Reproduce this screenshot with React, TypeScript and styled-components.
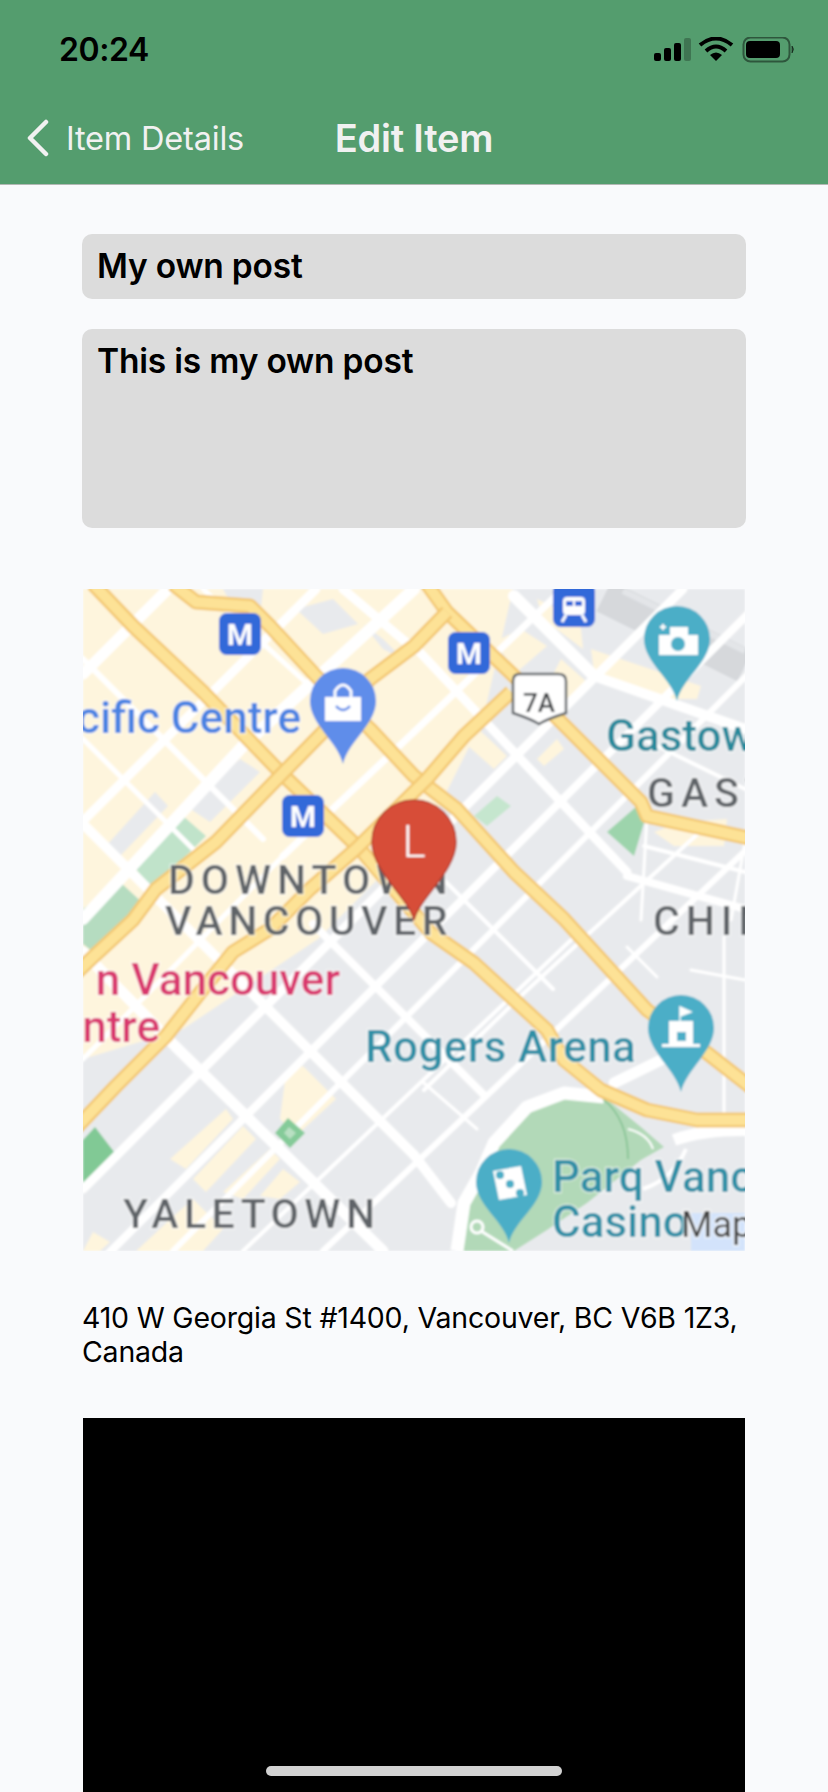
import React from "react";
import styled, { createGlobalStyle } from "styled-components";

const GlobalStyle = createGlobalStyle`
  html, body {
    margin: 0;
    padding: 0;
    background: #f9fafc;
    font-family: Inter, "Liberation Sans", sans-serif;
  }
`;

const Screen = styled.div`
  position: relative;
  width: 828px;
  height: 1792px;
  overflow: hidden;
  background: #f9fafc;
`;

const Header = styled.header`
  height: 185px;
  box-sizing: border-box;
  background: #549d6e;
  border-bottom: 1px solid #b2b8b4;
`;

const StatusBar = styled.div`
  height: 100px;
  padding: 30px 32px 0 59px;
  box-sizing: border-box;
  display: flex;
  justify-content: space-between;
  align-items: flex-start;
`;

const Clock = styled.span`
  font-size: 32px;
  line-height: 40px;
  font-weight: 600;
  letter-spacing: -0.4px;
  color: #000;
`;

const StatusIcons = styled.svg`
  display: block;
  margin-top: 7px;
`;

const NavBar = styled.nav`
  display: grid;
  grid-template-columns: 1fr auto 1fr;
  align-items: center;
  height: 76px;
  color: #f1f1f1;
`;

const BackLink = styled.div`
  display: flex;
  align-items: center;
  gap: 17px;
  padding-left: 26px;
  font-size: 32.5px;
  font-weight: 400;
  letter-spacing: -0.2px;
`;

const Title = styled.h1`
  margin: 0;
  font-size: 38px;
  font-weight: 600;
  letter-spacing: -0.2px;
`;

const Content = styled.main`
  display: flex;
  flex-direction: column;
  padding: 49px 82px 0 82px;
`;

const Field = styled.div<{ $tall?: boolean }>`
  height: ${(p) => (p.$tall ? "199px" : "65px")};
  margin-bottom: ${(p) => (p.$tall ? "61px" : "30px")};
  padding: 12px 15px;
  box-sizing: border-box;
  background: #dcdcdc;
  border-radius: 10px;
  font-size: 33.5px;
  line-height: 40px;
  font-weight: 600;
  color: #000;
  letter-spacing: -0.2px;
`;

const MapFrame = styled.svg`
  display: block;
  width: 662px;
  height: 662px;
  margin-left: 1px;
`;

const Address = styled.p`
  margin: 50px 0 49px;
  font-size: 28.5px;
  line-height: 34px;
  font-weight: 400;
  color: #000;
  letter-spacing: -0.2px;
`;

const VideoBlock = styled.div`
  width: 662px;
  height: 400px;
  margin-left: 1px;
  background: #000;
`;

const HomeIndicator = styled.div`
  position: absolute;
  left: 266px;
  bottom: 16px;
  width: 296px;
  height: 10px;
  border-radius: 5px;
  background: #d2d2d2;
`;

const GREY = "#e8eaed";
const CREAM = "#fef5dd";

// x1,y1,x2,y2,width
const streets: number[][] = [
  [0, 85, 85, 0, 11],
  [0, 232, 233, 0, 9],
  [0, 330, 160, 157, 12],
  [160, 157, 331, 0, 12],
  [0, 470, 200, 267, 5],
  [200, 267, 331, 143, 7],
  [331, 143, 480, 0, 7],
  [0, 600, 600, 0, 9],
  [0, 690, 690, 0, 8],
  [90, 662, 700, 50, 6],
  [160, 662, 488, 351, 4],
  [240, 662, 662, 262, 6],
  [341, 501, 441, 404, 4],
  [441, 404, 620, 240, 4],
  [531, 494, 578, 471, 11],
  [0, 235, 331, 566, 10],
  [331, 566, 368, 614, 10],
  [0, 363, 93, 458, 11],
  [93, 458, 300, 662, 11],
  [0, 70, 180, 250, 6],
  [0, 150, 110, 260, 5],
  [260, 0, 331, 60, 9],
  [331, 57, 544, 283, 9],
  [544, 287, 662, 320, 8],
  [431, 7, 511, 87, 12],
  [511, 87, 662, 140, 10],
  [230, 335, 400, 505, 8],
  [341, 494, 394, 540, 3],
  [564, 227, 558, 331, 3],
  [662, 253, 648, 331, 3],
  [561, 257, 662, 283, 4],
  [641, 348, 641, 531, 3],
  [608, 381, 662, 391, 3],
  [544, 358, 574, 388, 3],
  [560, 150, 662, 200, 4],
  [120, 0, 230, 100, 5],
  [340, 270, 470, 400, 4],
];

const creamAreas = [
  "0,0 430,0 400,130 345,240 235,350 100,440 0,470",
  "203,484 220,477 253,510 213,547 197,530",
  "87,570 143,520 150,530 103,580",
  "110,590 160,537 173,550 123,603",
  "140,603 187,560 197,570 160,610",
  "177,607 200,580 217,593 197,610",
  "10,643 27,653 17,662 0,662",
  "53,662 93,625 110,610 140,640 120,662",
  "508,60 618,97 614,110 561,110 511,83",
  "454,10 497,30 500,60 460,30",
  "411,53 438,40 464,57 434,83",
  "478,70 504,93 484,113 464,97",
  "454,170 474,150 481,160 461,177",
  "364,110 424,167 411,180 358,133",
  "571,243 598,233 644,230 641,257 591,257",
];

const greyBlocks = [
  "23,257 72,203 85,217 37,267",
  "103,217 157,170 177,183 127,233",
  "140,0 180,0 178,18 150,18",
  "213,20 250,10 275,35 240,45",
  "280,35 300,50 320,70 300,60",
];

const yellowRoads = [
  "10,-5 50,37 120,103 197,183 277,260 348,344 391,374 464,441 481,471 518,501 564,521 614,531 670,531",
  "90,-5 113,13 167,17 187,37 233,87 287,140 331,187 374,220 431,283 481,330 564,421 624,464 670,500",
  "344,-5 364,23 431,87 478,133 558,213 564,227 670,250",
  "364,23 331,57 287,90 240,143 197,187 133,253 73,300 50,331 10,368 -8,385",
  "428,103 381,147 344,190 273,260 227,300 187,340 150,363 120,400 83,447 33,497 -8,540",
];

const pinPath = (cx: number, cy: number, r: number, tip: number) =>
  `M${cx} ${tip} C${cx - 5} ${tip - 22} ${cx - r} ${cy + r * 0.7} ${cx - r} ${cy} A${r} ${r} 0 1 1 ${cx + r} ${cy} C${cx + r} ${cy + r * 0.7} ${cx + 5} ${tip - 22} ${cx} ${tip}Z`;

const MetroBadge: React.FC<{ x: number; y: number }> = ({ x, y }) => (
  <g>
    <rect x={x - 21} y={y - 21} width={42} height={42} rx={8} fill="#3069d9" />
    <text x={x} y={y + 11} textAnchor="middle" fontFamily="Roboto, sans-serif" fontSize={30} fontWeight={700} fill="#fff">
      M
    </text>
  </g>
);

type LabelProps = {
  x: number;
  y: number;
  color: string;
  size?: number;
  anchor?: "start" | "end";
  spacing?: number;
  weight?: number;
  children: string;
};

const MapLabel: React.FC<LabelProps> = ({ x, y, color, size = 44, anchor = "start", spacing, weight = 500, children }) => (
  <text
    x={x}
    y={y}
    fill={color}
    fontFamily="Roboto, sans-serif"
    fontSize={size}
    fontWeight={weight}
    textAnchor={anchor}
    letterSpacing={spacing}
    stroke="#ffffff"
    strokeOpacity={0.6}
    strokeWidth={2.5}
    paintOrder="stroke"
  >
    {children}
  </text>
);

const CityMap: React.FC = () => (
  <MapFrame viewBox="0 0 662 662">
    <defs>
      <filter id="soft" x="-5%" y="-5%" width="110%" height="110%">
        <feGaussianBlur stdDeviation="0.8" />
      </filter>
    </defs>
    <g filter="url(#soft)">
      <rect width={662} height={662} fill={GREY} />
      {creamAreas.map((points) => (
        <polygon key={points} points={points} fill={CREAM} />
      ))}
      {greyBlocks.map((points) => (
        <polygon key={points} points={points} fill={GREY} />
      ))}
      <path d="M521 7 L662 77" stroke="#d6d8db" strokeWidth={34} />
      <path d="M540 2 L662 62" stroke="#e3e5e8" strokeWidth={6} />

      {/* parks */}
      <polygon points="50,277 100,227 123,247 70,300" fill="#c0e3ca" />
      <polygon points="0,320 37,293 63,317 47,335 0,335" fill="#b5dcc0" />
      <polygon points="0,331 43,331 10,363 0,355" fill="#b5dcc0" />
      <polygon points="391,227 414,207 428,217 404,237" fill="#c5e6ce" />
      <polygon points="524,243 554,217 563,227 551,267" fill="#9dd4ac" />
      <polygon points="0,551 12,538 35,568 0,601" fill="#81c995" />

      {streets.map(([x1, y1, x2, y2, w]) => (
        <line key={`${x1}-${y1}-${x2}-${y2}`} x1={x1} y1={y1} x2={x2} y2={y2} stroke="#fff" strokeWidth={w} strokeLinecap="round" />
      ))}

      <polygon points="192,544 205,529 222,544 207,559" fill="#85cb99" />
      <polygon points="201,544 206,538 213,544 207,550" fill="#b9e0c3" />

      {/* stadium and park */}
      <path
        d="M398 584 L411 554 444 518 481 504 521 508 558 538 581 558 558 571 504 614 464 641 431 662 374 662 381 614Z"
        fill="#b2d9b8"
      />
      <path
        d="M374 662 L381 614 398 584 411 554 444 518 481 504 521 508"
        fill="none"
        stroke="#fff"
        strokeWidth={13}
        strokeLinejoin="round"
      />
      <path d="M591 551 Q620 540 670 541" stroke="#fff" strokeWidth={12} fill="none" />
      <rect x={608} y={624} width={54} height={38} fill="#d3e3fb" />
      <path d="M603 560 Q590 590 560 600" stroke="#fff" strokeWidth={4} fill="none" />
      <path d="M520 510 Q545 530 545 570" stroke="#7fc08e" strokeWidth={1.5} fill="none" />
      <path d="M545 540 Q565 545 570 560" stroke="#fff" strokeWidth={2} fill="none" />
      <circle cx={394} cy={638} r={6} fill="none" stroke="#fff" strokeWidth={3} />
      <path d="M398 642 L430 662" stroke="#fff" strokeWidth={3} />

      {yellowRoads.map((points) => (
        <g key={points} fill="none" strokeLinejoin="round">
          <polyline points={points} stroke="#f3c873" strokeWidth={15} />
          <polyline points={points} stroke="#fde296" strokeWidth={10} />
        </g>
      ))}

      <MapLabel x={218} y={144} anchor="end" color="#4a82e2">cific Centre</MapLabel>
      <MapLabel x={523} y={162} color="#26899b">Gastown</MapLabel>
      <MapLabel x={564} y={218} color="#5f6368" size={41} spacing={6}>GASTOWN</MapLabel>
      <MapLabel x={85} y={305} color="#5f6368" size={41} spacing={6}>DOWNTOWN</MapLabel>
      <MapLabel x={82} y={346} color="#5f6368" size={41} spacing={5.5}>VANCOUVER</MapLabel>
      <MapLabel x={570} y={346} color="#5f6368" size={41} spacing={6}>CHINATOWN</MapLabel>
      <MapLabel x={40} y={639} color="#5f6368" size={41} spacing={5.5}>YALETOWN</MapLabel>
      <MapLabel x={257} y={406} anchor="end" color="#d9386e">n Vancouver</MapLabel>
      <MapLabel x={77} y={453} anchor="end" color="#d9386e">ntre</MapLabel>
      <MapLabel x={282} y={473} color="#2f8fa6" spacing={0.4}>Rogers Arena</MapLabel>
      <MapLabel x={469} y={603} color="#2f8fa6">Parq Vancouver</MapLabel>
      <MapLabel x={469} y={648} color="#2f8fa6">Casino</MapLabel>

      <MetroBadge x={157} y={45} />
      <MetroBadge x={220} y={227} />
      <MetroBadge x={386} y={64} />
      <rect x={470} y={-6} width={42} height={44} rx={8} fill="#3069d9" />
      <rect x={480} y={8} width={22} height={18} rx={4} fill="#fff" />
      <rect x={483} y={12} width={7} height={5} fill="#3069d9" />
      <rect x={492} y={12} width={7} height={5} fill="#3069d9" />
      <path d="M483 26 L479 33 M499 26 L503 33" stroke="#fff" strokeWidth={3} />

      {/* route shield */}
      <path
        d="M437 85 H475 Q483 85 483 92 V124 Q464 130 456 135 Q448 130 430 124 V92 Q430 85 437 85Z"
        fill="#fff"
        stroke="#5f6368"
        strokeWidth={2.5}
      />
      <text x={456} y={123} textAnchor="middle" fontFamily="Roboto, sans-serif" fontSize={26} fontWeight={500} fill="#3c4043">
        7A
      </text>

      {/* shopping pin */}
      <path d={pinPath(260, 112, 33, 175)} fill="#5e8dea" />
      <rect x={242} y={108} width={36} height={24} fill="#fff" />
      <path d="M252 108 V102 Q260 90 268 102 V108" fill="none" stroke="#fff" strokeWidth={3} />
      <path d="M253 117 Q260 125 267 117" fill="none" stroke="#5e8dea" strokeWidth={2.5} />

      {/* camera pin */}
      <path d={pinPath(594, 50, 33, 112)} fill="#4baec7" />
      <rect x={576} y={46} width={39} height={20} fill="#fff" />
      <rect x={587} y={38} width={18} height={10} fill="#fff" />
      <circle cx={595} cy={55} r={7} fill="#4baec7" />
      <path d="M577 38 H583 M580 35 V41" stroke="#fff" strokeWidth={2} />

      {/* arena pin */}
      <path d={pinPath(598, 439, 33, 503)} fill="#4baec7" />
      <rect x={586} y={432} width={24} height={24} fill="#fff" />
      <rect x={579} y={455} width={38} height={3} fill="#fff" />
      <rect x={594} y={443} width={9} height={9} fill="#4baec7" />
      <path d="M597 432 V418 L608 423 L597 427" fill="#fff" stroke="#fff" strokeWidth={1.5} />

      {/* casino pin */}
      <path d={pinPath(426, 593, 33, 654)} fill="#4baec7" />
      <polygon points="410,582 438,577 444,606 416,611" fill="#fff" />
      <circle cx={417} cy={586} r={4} fill="#4baec7" />
      <circle cx={427} cy={595} r={4} fill="#4baec7" />
      <circle cx={437} cy={604} r={4} fill="#4baec7" />

      <text
        x={598}
        y={648}
        fontFamily="Roboto, sans-serif"
        fontSize={36}
        fill="#444"
        stroke="#ffffff"
        strokeOpacity={0.6}
        strokeWidth={3}
        paintOrder="stroke"
      >
        Map
      </text>

      {/* location marker */}
      <path d={pinPath(331, 253, 42, 331)} fill="#d74d39" stroke="#b53c2b" strokeWidth={1.5} />
      <text x={331} y={268} textAnchor="middle" fontFamily="Roboto, sans-serif" fontSize={44} fontWeight={300} fill="#fff">
        L
      </text>
    </g>
  </MapFrame>
);

const App: React.FC = () => (
  <Screen>
    <GlobalStyle />
    <Header>
      <StatusBar>
        <Clock>20:24</Clock>
        <StatusIcons width={142} height={28} viewBox="0 0 142 28">
          <rect x={0} y={16} width={7} height={8} rx={2} fill="#000" />
          <rect x={10} y={11} width={7} height={13} rx={2} fill="#000" />
          <rect x={20} y={6} width={7} height={18} rx={2} fill="#000" />
          <rect x={30} y={1} width={7} height={23} rx={2} fill="#000" opacity={0.25} />
          <path d="M46 8 Q62 -5 78 8" fill="none" stroke="#000" strokeWidth={4} />
          <path d="M52 14 Q62 5 72 14" fill="none" stroke="#000" strokeWidth={4} />
          <path d="M62 24 L56 18 Q62 13 68 18Z" fill="#000" />
          <rect x={89.5} y={0.5} width={46} height={24} rx={7} fill="none" stroke="#000" strokeOpacity={0.45} strokeWidth={2} />
          <rect x={92} y={4} width={34} height={17} rx={4} fill="#000" />
          <path d="M138 9 Q141 12 138 16Z" fill="#000" fillOpacity={0.45} stroke="#000" strokeOpacity={0.45} />
        </StatusIcons>
      </StatusBar>
      <NavBar>
        <BackLink>
          <svg width={23} height={38} viewBox="0 0 23 38">
            <path d="M20 3 L4 19 L20 35" fill="none" stroke="#f1f1f1" strokeWidth={4.5} strokeLinecap="round" strokeLinejoin="round" />
          </svg>
          Item Details
        </BackLink>
        <Title>Edit Item</Title>
        <div />
      </NavBar>
    </Header>
    <Content>
      <Field>My own post</Field>
      <Field $tall>This is my own post</Field>
      <CityMap />
      <Address>410 W Georgia St #1400, Vancouver, BC V6B 1Z3, Canada</Address>
      <VideoBlock />
    </Content>
    <HomeIndicator />
  </Screen>
);

export default App;
